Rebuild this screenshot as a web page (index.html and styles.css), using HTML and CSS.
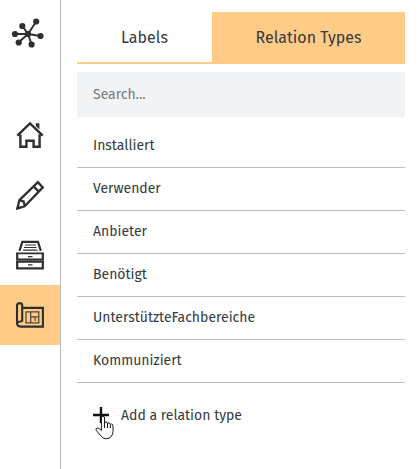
FILE: index.html
```html
<!DOCTYPE html>
<html lang="en">
<head>
<meta charset="utf-8">
<title>Relation Types</title>
<link rel="stylesheet" href="styles.css">
</head>
<body>
<div class="app">
  <nav class="sidebar">
    <a class="brand">
      <svg class="icon" width="60" height="60" viewBox="0 0 60 60">
        <path d="M28 34L36.2 21.5M28 34L22.3 26M28 34H15M28 34L40.5 36M28 34L18.5 42.5M28 34L31.6 44.5" stroke="#2e2f30" stroke-width="2"/>
        <g fill="#2e2f30"><circle cx="28" cy="34" r="3.1"/><circle cx="36.2" cy="21.5" r="3.1"/><circle cx="22.3" cy="26" r="3.1"/><circle cx="15" cy="34" r="3.1"/><circle cx="40.5" cy="36" r="3.1"/><circle cx="18.7" cy="42.5" r="3.1"/><circle cx="31.6" cy="44.5" r="3.1"/></g>
      </svg>
    </a>
    <a class="item">
      <svg class="icon" width="60" height="60" viewBox="0 0 60 60">
        <path d="M17.3 30.7L30 18.4L42.7 30.7M20.4 29.5V41.7H26.4V35.7H33.6V41.7H39.6V29.5" stroke="#2e2f30" stroke-width="2.4" fill="none"/>
        <path d="M35.8 18.2H39.4V24.4L35.8 21Z" fill="#2e2f30"/>
      </svg>
    </a>
    <a class="item">
      <svg class="icon" width="60" height="60" viewBox="0 0 60 60">
        <path d="M17.4 43.4L19.4 35.2L37.9 17.1L42.8 22.4L24.7 41.3ZM33.6 21.4L38.8 26.6M20 35.4L23.6 36.4L24.6 40.5" stroke="#2e2f30" stroke-width="2.3" fill="none"/>
        <path d="M16 44.7L17.5 39.5L21.2 43.4Z" fill="#2e2f30"/>
      </svg>
    </a>
    <a class="item">
      <svg class="icon" width="60" height="60" viewBox="0 0 60 60">
        <path d="M19.5 25.8L22.3 16.9H38L40.8 25.8M17.2 28.3V34.6H42.8V28.3M17.2 36.9V43.3H42.8V36.9" stroke="#2e2f30" stroke-width="2.2" fill="none"/>
        <path d="M16 28.3H44M16 36.9H44" stroke="#2e2f30" stroke-width="1.8"/>
        <path d="M25 20H36M24 22.5H36.5M23 25.2H37.5M28 31.6H32.5M28 39.8H32.5" stroke="#2e2f30" stroke-width="1.2"/>
      </svg>
    </a>
    <a class="item active">
      <svg class="icon" width="60" height="60" viewBox="0 0 60 60">
        <path d="M22.2 36.5V20.5Q22.2 18.1 19.7 18.1Q17 18.1 17 20.7V37.5Q17 41.6 20.5 41.6H42.9V22.9H22.5M17.2 38.5Q17.8 36.3 22.2 36.3" stroke="#2e2f30" stroke-width="2.1" fill="none"/>
        <path d="M26 26.8H38.8V37.8H26ZM30.7 27V37.5M31 31.8H38.5M35 32V36" stroke="#4b4338" stroke-width="1.2" fill="none"/>
      </svg>
    </a>
  </nav>
  <main class="panel">
    <div class="tabs">
      <div class="tab tab-labels"><span>Labels</span></div>
      <div class="tab tab-types"><span>Relation Types</span></div>
    </div>
    <input class="search" type="text" placeholder="Search...">
    <ul class="list">
      <li><span>Installiert</span></li>
      <li><span>Verwender</span></li>
      <li><span>Anbieter</span></li>
      <li><span>Benötigt</span></li>
      <li><span>UnterstützteFachbereiche</span></li>
      <li><span>Kommuniziert</span></li>
    </ul>
    <div class="add">
      <svg class="plus" width="16" height="16" viewBox="0 0 16 16"><path d="M8 0V16M0 8H16" stroke="#111" stroke-width="2.4"/></svg>
      <span>Add a relation type</span>
      <svg class="pointer" width="19" height="25" viewBox="0 0 19 25">
        <path d="M6.4 15.5V3Q6.4 1.2 8 1.2Q9.5 1.2 9.5 3V8.2Q9.7 7 11 7Q12.5 7 12.5 8.8Q12.8 7.7 14 7.9Q15.3 8 15.3 9.6Q15.7 8.7 16.8 9Q18 9.3 18 11V16.5Q18 19 16.5 21Q15.5 23.6 12 23.6H10.5Q8 23.6 6.3 21.4L1.4 15.5Q.4 13.7 1.6 13.2Q3 12.6 4.3 13.7Z" fill="#fff" stroke="#15151f" stroke-width="1"/>
        <path d="M9.5 8V13M12.5 9V13M15.3 10V13" stroke="#15151f" stroke-width="1"/>
      </svg>
    </div>
  </main>
</div>
</body>
</html>
```
FILE: styles.css
```css
* { box-sizing: border-box; }
body {
  margin: 0;
  background: #fff;
  color: #343a40;
  font-family: "Fira Sans", "Noto Sans", sans-serif;
  font-size: 14px;
}
.app { display: flex; width: 405px; height: 469px; }
.sidebar { width: 61px; border-right: 1px solid #bdbdbd; }
.icon { display: block; }
.brand { display: block; height: 105px; }
.item { display: block; height: 60px; }
.active { background: #ffcc88; }
.panel { flex: 1; padding: 12px 0 0 16px; }
.tabs { display: flex; height: 52px; font-size: 16px; }
.tab {
  display: flex;
  align-items: center;
  justify-content: center;
  border-bottom: 2px solid #ffcc88;
}
.tab-labels { width: 135px; }
.tab-types { flex: 1; background: #ffcc88; }
.search {
  display: block;
  width: 100%;
  height: 45px;
  margin: 8px 0;
  padding: 0 16px;
  border: 0;
  background: #f1f3f5;
  font: inherit;
}
.search::placeholder { color: #757b81; opacity: 1; }
.list { margin: 0; padding: 0; list-style: none; }
.list li {
  display: flex;
  align-items: center;
  height: 43px;
  padding: 0 16px 2px;
  border-bottom: 1px solid #bdbdbd;
}
.add {
  position: relative;
  display: flex;
  align-items: center;
  gap: 12px;
  height: 64px;
  padding-left: 16px;
}
.pointer { position: absolute; left: 18px; top: 32px; }
```
